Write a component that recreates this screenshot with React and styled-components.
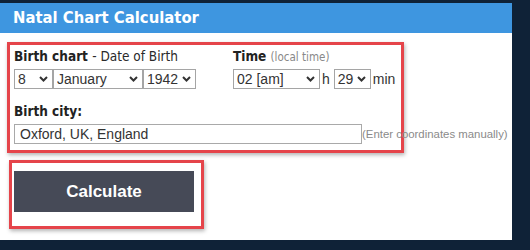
import React from 'react'
import styled, { createGlobalStyle } from 'styled-components'

const GlobalStyle = createGlobalStyle`
  html, body {
    margin: 0;
    padding: 0;
    background: #0f2237;
  }
  body {
    width: 530px;
    height: 250px;
    overflow: hidden;
    font-family: "DejaVu Sans Condensed", "DejaVu Sans", sans-serif;
  }
`

const Panel = styled.div`
  width: 512px;
  height: 237px;
  margin-top: 3px;
  background: #fff;
  overflow: hidden;
`

const Header = styled.div`
  height: 30px;
  background: #3e96e0;
  color: #fff;
  font-weight: bold;
  font-size: 16.5px;
  line-height: 30px;
  padding-left: 13px;
`

const Body = styled.div`
  padding: 9px 0 0 7px;
`

const Marked = styled.div`
  border: 3px solid #e5444a;
  box-shadow: 1px 2px 4px rgba(0, 0, 0, 0.3);
  width: ${(p) => p.$w}px;
  height: ${(p) => p.$h}px;
  box-sizing: border-box;
  padding: ${(p) => p.$pad};
  margin: ${(p) => p.$m || 0};
  white-space: nowrap;
`

const Row = styled.div`
  display: flex;
  align-items: flex-start;
`

const Group = styled.div`
  flex: none;
  width: ${(p) => p.$w}px;
`

const Label = styled.div`
  font-size: 13.5px;
  font-weight: bold;
  color: #222;
  height: 17px;
  line-height: 17px;
  margin-top: ${(p) => p.$mt || 0}px;
  margin-bottom: 4px;
`

const Sub = styled.span`
  font-weight: normal;
  color: ${(p) => (p.$light ? '#888' : '#2a2a2a')};
  font-size: ${(p) => (p.$light ? '11.5px' : '13.5px')};
`

const Controls = styled.div`
  display: flex;
  align-items: center;
  font-family: "Liberation Sans", Arial, sans-serif;
  font-size: 14px;
  color: #333;
`

const SelectWrap = styled.div`
  position: relative;
  flex: none;
  width: ${(p) => p.$w}px;
  height: 20px;
  box-sizing: border-box;
  border: 1px solid #a5a5a5;
`

const Select = styled.select`
  appearance: none;
  border: none;
  outline: none;
  background: transparent;
  width: 100%;
  height: 18px;
  margin: 0;
  padding: 0 0 0 3px;
  font-family: "Liberation Sans", Arial, sans-serif;
  font-size: 14px;
  color: #333;
`

const Chevron = styled.svg`
  position: absolute;
  right: 4px;
  top: 6px;
  pointer-events: none;
`

const Unit = styled.span`
  margin: 0 4px 0 2px;
  line-height: 20px;
`

const TextInput = styled.input`
  flex: none;
  width: 348px;
  height: 20px;
  box-sizing: border-box;
  border: 1px solid #a9a9a9;
  padding: 0 5px;
  font-family: "Liberation Sans", Arial, sans-serif;
  font-size: 14px;
  color: #333;
`

const Hint = styled.span`
  font-size: 11.4px;
  color: #8a8a8a;
`

const Button = styled.button`
  width: 180px;
  height: 41px;
  border: none;
  background: #464a57;
  color: #fff;
  font-family: "Liberation Sans", Arial, sans-serif;
  font-weight: bold;
  font-size: 17px;
`

function Dropdown({ w, value }) {
  return (
    <SelectWrap $w={w}>
      <Select defaultValue={value}>
        <option>{value}</option>
      </Select>
      <Chevron width="9" height="6" viewBox="0 0 9 6">
        <path d="M1 1l3.5 3.5L8 1" fill="none" stroke="#333" strokeWidth="2" />
      </Chevron>
    </SelectWrap>
  )
}

export default function App() {
  return (
    <>
      <GlobalStyle />
      <Panel>
        <Header>Natal Chart Calculator</Header>
        <Body>
          <Marked $w={397} $h={111} $pad="3px 0 0 4px" $m="0 0 7px 0">
            <Row>
              <Group $w={219}>
                <Label>
                  Birth chart <Sub>- Date of Birth</Sub>
                </Label>
                <Controls>
                  <Dropdown w={39} value="8" />
                  <Dropdown w={90} value="January" />
                  <Dropdown w={53} value="1942" />
                </Controls>
              </Group>
              <Group $w={170}>
                <Label>
                  Time <Sub $light>(local time)</Sub>
                </Label>
                <Controls>
                  <Dropdown w={87} value="02 [am]" />
                  <Unit>h</Unit>
                  <Dropdown w={37} value="29" />
                  <Unit>min</Unit>
                </Controls>
              </Group>
            </Row>
            <Label $mt={14}>Birth city:</Label>
            <Controls>
              <TextInput defaultValue="Oxford, UK, England" />
              <Hint>(Enter coordinates manually)</Hint>
            </Controls>
          </Marked>
          <Marked $w={195} $h={69} $pad="8px 0 0 2px" $m="0 0 0 2px">
            <Button>Calculate</Button>
          </Marked>
        </Body>
      </Panel>
    </>
  )
}
